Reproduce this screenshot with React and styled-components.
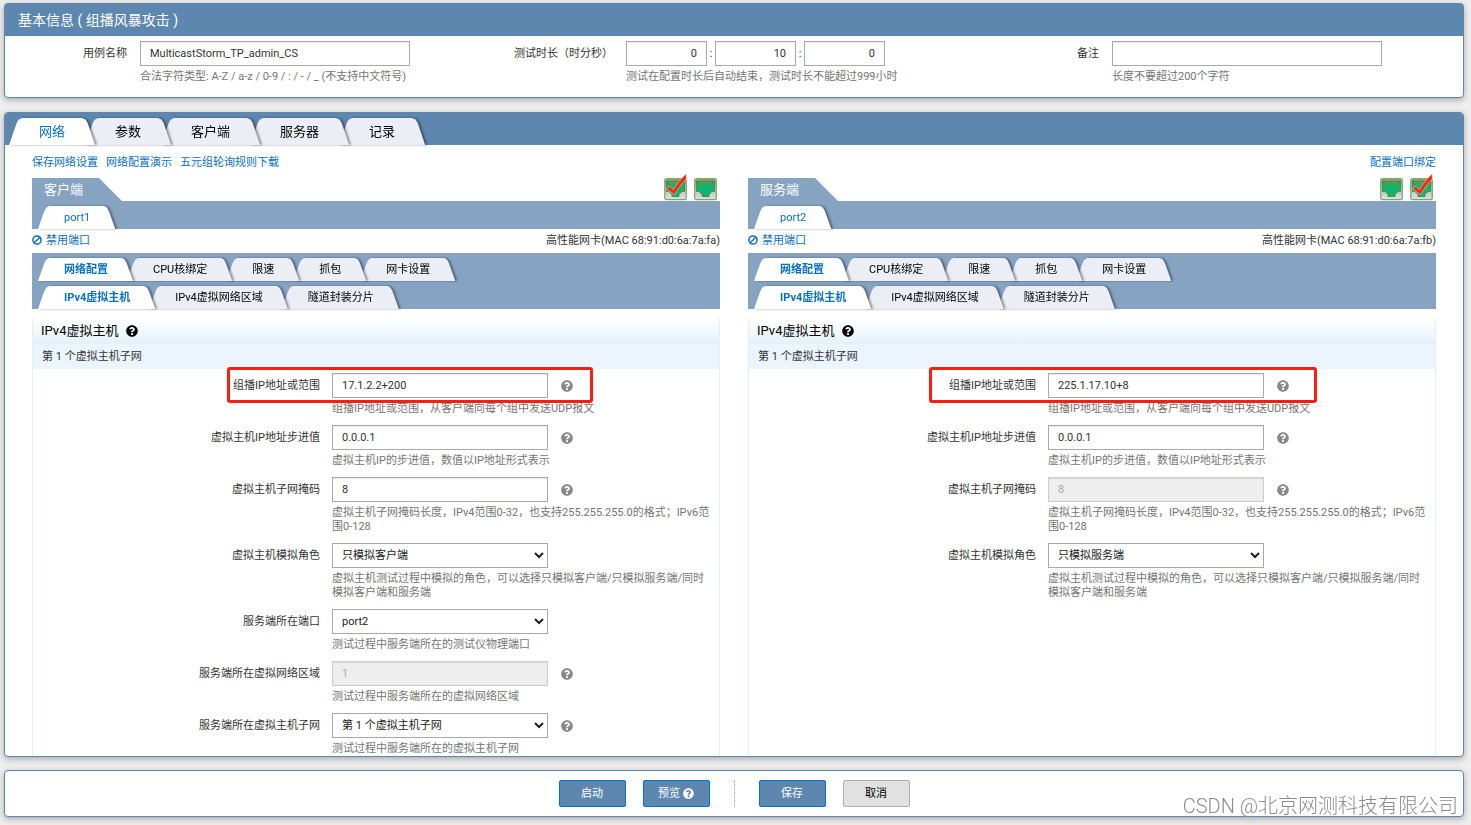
import { useState } from 'react';
import styled, { createGlobalStyle, css } from 'styled-components';
import { FaQuestionCircle } from 'react-icons/fa';

const colors = {
    primary: '#5d87af',
    secondary: '#87a3c2',
    link: '#0a70c4',
    text: '#333',
    muted: '#757575',
    border: '#a9a9a9',
    mark: '#ff1d10',
};

const GlobalStyle = createGlobalStyle`
    * {
        box-sizing: border-box;
    }
    body {
        margin: 0;
        background: #eee;
        color: ${colors.text};
        font-family: Roboto, "Noto Sans CJK SC", sans-serif;
        font-size: 11px;
        line-height: 14px;
    }
    button, input, select {
        font: inherit;
    }
`;

const Page = styled.div`
    display: flex;
    flex-direction: column;
    height: 100vh;
    padding: 3px 7px 8px 4px;
`;

const Panel = styled.section`
    flex: none;
    border: 1px solid ${colors.primary};
    border-radius: 4px;
    background: #fff;
    box-shadow: 0 2px 6px rgba(0, 0, 0, 0.3);
`;

const PanelTitle = styled.h1`
    margin: 0;
    padding: 0 13px;
    background: ${colors.primary};
    color: #fff;
    font-size: 14px;
    font-weight: 400;
    line-height: 32px;
`;

const TabsPanel = styled(Panel)`
    display: flex;
    flex: 1;
    flex-direction: column;
    min-height: 0;
    margin: 14px 0 13px;
    overflow: hidden;
`;

const Footer = styled(Panel)`
    display: flex;
    justify-content: center;
    gap: 17px;
    padding: 9px;
`;

const BasicForm = styled.div`
    display: grid;
    grid-template-columns: repeat(3, 1fr);
    padding: 5px 0 13px;
`;

const BasicField = styled.div`
    display: grid;
    grid-template-columns: 122px 1fr;
    column-gap: 13px;
`;

const Label = styled.label`
    line-height: 25px;
    text-align: right;
    white-space: nowrap;
`;

const Input = styled.input`
    width: ${props => props.$width || '216px'};
    height: 25px;
    padding: 0 9px;
    border: 1px solid ${colors.border};
    border-radius: 0;
    background: #fff;
    box-shadow: inset 0 1px 1px rgba(0, 0, 0, 0.08);
    color: ${colors.text};
    text-align: ${props => props.$align || 'left'};
    &:disabled {
        border-color: #ccc;
        background: #eee;
        color: #aaa;
    }
`;

const Select = styled.select`
    width: 216px;
    height: 25px;
    padding: 0 5px;
    border: 1px solid ${colors.border};
    border-radius: 0;
    background: #fff;
    color: #222;
`;

const Hint = styled.p`
    margin: 4px 0 0;
    color: ${colors.muted};
    line-height: 14px;
`;

const TimeInputs = styled.div`
    display: flex;
    align-items: center;
    span {
        width: 8px;
        text-align: center;
    }
`;

const TabBar = styled.div`
    display: flex;
    flex: none;
    align-items: flex-end;
    height: ${props => props.$large ? '32px' : '28px'};
    padding-left: ${props => props.$large ? '4px' : '6px'};
    background: ${props => props.$large ? colors.primary : colors.secondary};
`;

const largeTab = css`
    height: 27px;
    margin-right: -10px;
    font-size: 13px;
    line-height: 27px;
    &::before {
        width: 14px;
        clip-path: path('M0 27 L7 7 Q9 0 14 0 V27 Z');
    }
    &::after {
        width: 14px;
        clip-path: path('M0 0 Q5 0 7 6 L14 27 H0 Z');
    }
    span {
        padding: 0 17px;
    }
`;

const smallTab = css`
    height: 23px;
    margin-right: -6px;
    line-height: 22px;
    &::before {
        width: 12px;
        clip-path: path('M0 23 L6 6 Q8 0 12 0 V23 Z');
    }
    &::after {
        width: 12px;
        clip-path: path('M0 0 Q4 0 6 6 L12 23 H0 Z');
    }
    span {
        padding: 1px 14px 0 15px;
    }
`;

const StyledTab = styled.button`
    display: flex;
    z-index: ${props => props.$order};
    padding: 0;
    border: 0;
    background: none;
    color: ${props => props.$active ? colors.link : '#000'};
    font-weight: ${props => props.$active && props.$bold ? 700 : 400};
    white-space: nowrap;
    filter: drop-shadow(2px 0 1px rgba(0, 0, 0, 0.4));
    cursor: pointer;
    &::before, &::after {
        content: '';
        height: 100%;
    }
    &::before, &::after, span {
        background: ${props => props.$active ? '#fff' : '#ebeef4'};
    }
    span {
        margin: 0 -1px;
    }
    ${props => props.$large ? largeTab : smallTab}
`;

const LinkRow = styled.nav`
    display: flex;
    flex: none;
    gap: 8px;
    padding: 2px 27px 0;
    line-height: 31px;
    a:last-child {
        margin-left: auto;
    }
`;

const Link = styled.a`
    color: ${colors.link};
    text-decoration: none;
`;

const Sides = styled.div`
    display: grid;
    flex: 1 0 auto;
    grid-template-columns: 1fr 1fr;
    gap: 28px;
    padding: 0 27px;
`;

const StyledSide = styled.div`
    display: flex;
    flex-direction: column;
`;

const SideHead = styled.div`
    display: flex;
    justify-content: space-between;
    height: 23px;
    padding-right: 3px;
`;

const SideTitle = styled.h2`
    margin: 0;
    padding: 0 39px 0 12px;
    background: ${colors.secondary};
    clip-path: polygon(0 0, calc(100% - 23px) 0, 100% 100%, 0 100%);
    color: #fff;
    font-size: 13px;
    font-weight: 400;
    line-height: 23px;
`;

const PortIcons = styled.div`
    display: flex;
    gap: 7px;
    svg {
        display: block;
        overflow: visible;
    }
`;

const PortInfo = styled.div`
    display: flex;
    justify-content: space-between;
    height: 24px;
    line-height: 23px;
    svg {
        margin-right: 4px;
        vertical-align: -1px;
    }
`;

const Config = styled.div`
    flex: 1;
    margin-top: 9px;
    border: solid #e3eef8;
    border-width: 0 1px;
`;

const ConfigTitle = styled.h3`
    display: flex;
    align-items: center;
    gap: 8px;
    height: 26px;
    margin: 0;
    padding: 0 8px;
    background: linear-gradient(#fff, #e3f1fa);
    color: #000;
    font-size: 13px;
    font-weight: 400;
`;

const SubTitle = styled.h4`
    margin: 0;
    padding: 0 9px;
    background: #ecf4fe;
    font-size: 11px;
    font-weight: 400;
    line-height: 25px;
`;

const Fields = styled.div`
    padding: 4px 8px 20px 0;
`;

const Field = styled.div`
    position: relative;
    display: grid;
    grid-template-columns: 287px 1fr;
    column-gap: 12px;
    margin-bottom: 9px;
`;

const ControlLine = styled.div`
    display: flex;
    align-items: center;
    gap: 13px;
    svg {
        color: #888;
    }
`;

// red frame drawn over the field
const Mark = styled.div`
    position: absolute;
    top: -6px;
    left: ${props => props.$left};
    width: ${props => props.$width};
    height: 36px;
    border: 3px solid ${colors.mark};
    border-radius: 3px;
    pointer-events: none;
`;

const Button = styled.button`
    display: flex;
    justify-content: center;
    align-items: center;
    gap: 3px;
    width: 67px;
    height: 27px;
    padding: 0;
    border: 1px solid ${props => props.$plain ? '#adadad' : '#0070c9'};
    border-radius: 2px;
    background: ${props => props.$plain ? '#e1e1e1' : colors.primary};
    color: ${props => props.$plain ? '#000' : '#fff'};
    cursor: pointer;
`;

const Divider = styled.div`
    margin: 0 7px;
    border-left: 1px dotted #999;
`;

const Watermark = styled.div`
    position: fixed;
    right: 13px;
    bottom: 6px;
    color: #8c8c8c;
    font-size: 20px;
    font-weight: 300;
    line-height: 26px;
    text-shadow: -1px -1px 0 rgba(255, 255, 255, 0.7);
    pointer-events: none;
`;

const mainTabs = ['网络', '参数', '客户端', '服务器', '记录'];
const configTabs = ['网络配置', 'CPU核绑定', '限速', '抓包', '网卡设置'];
const hostTabs = ['IPv4虚拟主机', 'IPv4虚拟网络区域', '隧道封装分片'];

const ipHint = '组播IP地址或范围，从客户端向每个组中发送UDP报文';
const stepHint = '虚拟主机IP的步进值，数值以IP地址形式表示';
const maskHint = '虚拟主机子网掩码长度，IPv4范围0-32，也支持255.255.255.0的格式；IPv6范围0-128';
const roleHint = '虚拟主机测试过程中模拟的角色，可以选择只模拟客户端/只模拟服务端/同时模拟客户端和服务端';

const clientFields = [
    { label: '组播IP地址或范围', value: '17.1.2.2+200', hint: ipHint, help: true, mark: { left: '194px', width: '366px' } },
    { label: '虚拟主机IP地址步进值', value: '0.0.0.1', hint: stepHint, help: true },
    { label: '虚拟主机子网掩码', value: '8', hint: maskHint, help: true },
    { label: '虚拟主机模拟角色', options: ['只模拟客户端', '只模拟服务端'], hint: roleHint },
    { label: '服务端所在端口', options: ['port2'], hint: '测试过程中服务端所在的测试仪物理端口' },
    { label: '服务端所在虚拟网络区域', value: '1', disabled: true, hint: '测试过程中服务端所在的虚拟网络区域', help: true },
    { label: '服务端所在虚拟主机子网', options: ['第 1 个虚拟主机子网'], hint: '测试过程中服务端所在的虚拟主机子网', help: true },
];

const serverFields = [
    { label: '组播IP地址或范围', value: '225.1.17.10+8', hint: ipHint, help: true, mark: { left: '180px', width: '388px' } },
    { label: '虚拟主机IP地址步进值', value: '0.0.0.1', hint: stepHint, help: true },
    { label: '虚拟主机子网掩码', value: '8', disabled: true, hint: maskHint, help: true },
    { label: '虚拟主机模拟角色', options: ['只模拟服务端', '只模拟客户端'], hint: roleHint },
];

function BanIcon() {
    return (
        <svg width="10" height="10" viewBox="0 0 10 10" fill="none" stroke="currentColor" strokeWidth="1.5">
            <circle cx="5" cy="5" r="4.1" />
            <path d="M2.2 7.8 L7.8 2.2" />
        </svg>
    );
}

function PortIcon({ checked }) {
    return (
        <svg width="23" height="23" viewBox="0 0 23 23">
            <defs>
                <linearGradient id="portFrame" x1="0" y1="0" x2="0" y2="1">
                    <stop offset="0" stopColor="#8fa184" />
                    <stop offset="1" stopColor="#e2e2e2" />
                </linearGradient>
            </defs>
            <rect x="0.7" y="0.7" width="21.6" height="21" rx="2" fill="url(#portFrame)" stroke="#7aab62" strokeWidth="1.2" />
            <path d="M2.5 3 H20.5 V13.5 H17.8 L15 16.5 V18.5 H8 V16.5 L5.2 13.5 H2.5 Z" fill="#10b56b" stroke="#4a8a62" strokeWidth="1" />
            <path d="M3 3 H20 V5.2 H3 Z" fill="#58803f" />
            <path d="M5 4.5 H18" stroke="#9d9a48" strokeWidth="1.6" strokeDasharray="1.4 0.8" />
            {checked && (
                <path d="M2.3 10.6 L5.8 8.2 L9.3 11.8 C12.5 6.5 16.5 1 22.2 -4.2 L22.3 1 C18 5.2 14 11 10.4 16.8 Z" fill="#fb2a0c" stroke="#fff" strokeWidth="0.4" />
            )}
        </svg>
    );
}

function Tabs({ items, large, bold }) {
    const [active, setActive] = useState(0);
    return (
        <TabBar $large={large} role="tablist">
            {items.map((item, i) => (
                <StyledTab
                    key={item}
                    type="button"
                    role="tab"
                    aria-selected={i === active}
                    $active={i === active}
                    $order={i === active ? items.length + 1 : items.length - i}
                    $large={large}
                    $bold={bold}
                    onClick={() => setActive(i)}
                >
                    <span>{item}</span>
                </StyledTab>
            ))}
        </TabBar>
    );
}

function ConfigField({ id, field }) {
    return (
        <Field>
            <Label htmlFor={id}>{field.label}</Label>
            <div>
                <ControlLine>
                    {field.options ? (
                        <Select id={id}>
                            {field.options.map(option => <option key={option}>{option}</option>)}
                        </Select>
                    ) : (
                        <Input id={id} type="text" defaultValue={field.value} disabled={field.disabled} />
                    )}
                    {field.help && <FaQuestionCircle size={12} />}
                </ControlLine>
                <Hint>{field.hint}</Hint>
            </div>
            {field.mark && <Mark $left={field.mark.left} $width={field.mark.width} />}
        </Field>
    );
}

function Side({ name, title, port, mac, checks, fields }) {
    return (
        <StyledSide>
            <SideHead>
                <SideTitle>{title}</SideTitle>
                <PortIcons>
                    {checks.map((checked, i) => <PortIcon key={i} checked={checked} />)}
                </PortIcons>
            </SideHead>
            <Tabs items={[port]} />
            <PortInfo>
                <Link href="#"><BanIcon />禁用端口</Link>
                <span>高性能网卡(MAC {mac})</span>
            </PortInfo>
            <Tabs items={configTabs} bold />
            <Tabs items={hostTabs} bold />
            <Config>
                <ConfigTitle>IPv4虚拟主机 <FaQuestionCircle size={12} /></ConfigTitle>
                <SubTitle>第 1 个虚拟主机子网</SubTitle>
                <Fields>
                    {fields.map((field, i) => (
                        <ConfigField key={field.label} id={`${name}-${i}`} field={field} />
                    ))}
                </Fields>
            </Config>
        </StyledSide>
    );
}

function App() {
    return (
        <Page>
            <GlobalStyle />
            <Panel>
                <PanelTitle>基本信息 ( 组播风暴攻击 )</PanelTitle>
                <BasicForm>
                    <BasicField>
                        <Label htmlFor="caseName">用例名称</Label>
                        <div>
                            <Input id="caseName" type="text" $width="270px" defaultValue="MulticastStorm_TP_admin_CS" />
                            <Hint>合法字符类型: A-Z / a-z / 0-9 / : / - / _ (不支持中文符号)</Hint>
                        </div>
                    </BasicField>
                    <BasicField>
                        <Label htmlFor="hours">测试时长（时分秒）</Label>
                        <div>
                            <TimeInputs>
                                <Input id="hours" type="text" $width="81px" $align="right" defaultValue="0" />
                                <span>:</span>
                                <Input type="text" aria-label="分" $width="81px" $align="right" defaultValue="10" />
                                <span>:</span>
                                <Input type="text" aria-label="秒" $width="81px" $align="right" defaultValue="0" />
                            </TimeInputs>
                            <Hint>测试在配置时长后自动结束，测试时长不能超过999小时</Hint>
                        </div>
                    </BasicField>
                    <BasicField>
                        <Label htmlFor="remark">备注</Label>
                        <div>
                            <Input id="remark" type="text" $width="270px" />
                            <Hint>长度不要超过200个字符</Hint>
                        </div>
                    </BasicField>
                </BasicForm>
            </Panel>
            <TabsPanel>
                <Tabs items={mainTabs} large />
                <LinkRow>
                    <Link href="#">保存网络设置</Link>
                    <Link href="#">网络配置演示</Link>
                    <Link href="#">五元组轮询规则下载</Link>
                    <Link href="#">配置端口绑定</Link>
                </LinkRow>
                <Sides>
                    <Side name="client" title="客户端" port="port1" mac="68:91:d0:6a:7a:fa" checks={[true, false]} fields={clientFields} />
                    <Side name="server" title="服务端" port="port2" mac="68:91:d0:6a:7a:fb" checks={[false, true]} fields={serverFields} />
                </Sides>
            </TabsPanel>
            <Footer>
                <Button type="button">启动</Button>
                <Button type="button">预览<FaQuestionCircle size={11} /></Button>
                <Divider />
                <Button type="button">保存</Button>
                <Button type="button" $plain>取消</Button>
            </Footer>
            <Watermark>CSDN @北京网测科技有限公司</Watermark>
        </Page>
    );
}

export default App;
